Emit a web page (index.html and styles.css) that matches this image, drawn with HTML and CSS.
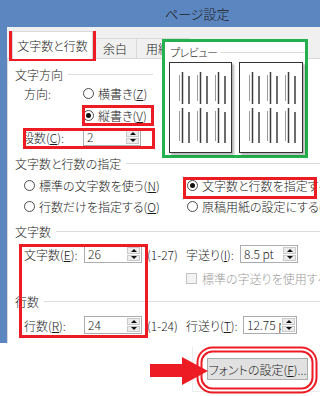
FILE: index.html
```html
<!DOCTYPE html>
<html lang="ja">
<head>
<meta charset="utf-8">
<title>ページ設定</title>
<link rel="stylesheet" href="styles.css">
</head>
<body>
<div class="screen">
  <div class="titlebar"><span class="title">ページ設定</span></div>
  <div class="dialog">
    <div class="frame-left"></div>
    <div class="body">
      <div class="tabs">
        <div class="tab active">文字数と行数</div>
        <div class="tab t2">余白</div>
        <div class="tab t3">用紙</div>
      </div>
      <div class="panel">
        <div class="ghead g1"><span>文字方向</span></div>
        <div class="row r22 ind9">
          <span class="lbl w59">方向:</span>
          <span class="radio"></span><span>横書き(<u>Z</u>)</span>
        </div>
        <div class="row r22 ind68">
          <span class="radio on"></span><span>縦書き(<u>V</u>)</span>
        </div>
        <div class="row r22 ind7">
          <span class="lbl w61">段数(<u>C</u>):</span>
          <span class="spin"><span class="val">2</span><span class="btns"><span class="up"></span><span class="dn"></span></span></span>
        </div>

        <div class="ghead g2"><span>文字数と行数の指定</span></div>
        <div class="radios">
          <div class="ropt"><span class="radio"></span><span>標準の文字数を使う(<u>N</u>)</span></div>
          <div class="ropt"><span class="radio on"></span><span>文字数と行数を指定する(<u>H</u>)</span></div>
          <div class="ropt"><span class="radio"></span><span>行数だけを指定する(<u>O</u>)</span></div>
          <div class="ropt"><span class="radio"></span><span>原稿用紙の設定にする(<u>X</u>)</span></div>
        </div>

        <div class="ghead g3"><span>文字数</span></div>
        <div class="row r20 ind9 m5">
          <span class="lbl w60">文字数(<u>E</u>):</span>
          <span class="spin"><span class="val">26</span><span class="btns"><span class="up"></span><span class="dn"></span></span></span>
          <span class="range">(1-27)</span>
          <span class="lbl w54">字送り(<u>I</u>):</span>
          <span class="spin"><span class="val">8.5 pt</span><span class="btns"><span class="up"></span><span class="dn"></span></span></span>
        </div>
        <div class="row r20 chkrow">
          <span class="check"></span><span class="disabled">標準の字送りを使用する(<u>A</u>)</span>
        </div>

        <div class="ghead g4"><span>行数</span></div>
        <div class="row r20 ind9 m6">
          <span class="lbl w60">行数(<u>R</u>):</span>
          <span class="spin"><span class="val">24</span><span class="btns"><span class="up"></span><span class="dn"></span></span></span>
          <span class="range">(1-24)</span>
          <span class="lbl w57">行送り(<u>T</u>):</span>
          <span class="spin narrow"><span class="val">12.75 pt</span><span class="btns"><span class="up"></span><span class="dn"></span></span></span>
        </div>
      </div>
    </div>
  </div>
  <div class="footer">
    <div class="btn-area">
      <div class="btn">フォントの設定(<u>F</u>)...</div>
    </div>
  </div>

  <div class="preview">
    <div class="pv-head"><span>プレビュー</span></div>
    <div class="pages">
      <div class="page">
        <svg width="61" height="89" viewBox="0 0 61 89">
          <g stroke="#9a9a9a" stroke-width="1">
            <line x1="9.5" y1="12" x2="9.5" y2="38"/><line x1="27.5" y1="12" x2="27.5" y2="38"/><line x1="45.5" y1="12" x2="45.5" y2="38"/>
            <line x1="9.5" y1="48" x2="9.5" y2="78"/><line x1="27.5" y1="48" x2="27.5" y2="78"/><line x1="45.5" y1="48" x2="45.5" y2="78"/>
          </g>
          <g stroke="#3c3c3c" stroke-width="1.5">
            <line x1="12.5" y1="9" x2="12.5" y2="41"/><line x1="19" y1="13" x2="19" y2="41"/>
            <line x1="30.5" y1="9" x2="30.5" y2="41"/><line x1="37" y1="13" x2="37" y2="41"/>
            <line x1="48.5" y1="9" x2="48.5" y2="41"/><line x1="55" y1="13" x2="55" y2="41"/>
            <line x1="12.5" y1="45" x2="12.5" y2="80"/><line x1="19" y1="49" x2="19" y2="80"/>
            <line x1="30.5" y1="45" x2="30.5" y2="80"/><line x1="37" y1="49" x2="37" y2="80"/>
            <line x1="48.5" y1="45" x2="48.5" y2="80"/><line x1="55" y1="49" x2="55" y2="80"/>
          </g>
        </svg>
      </div>
      <div class="page p2">
        <svg width="62" height="89" viewBox="0 0 62 89">
          <g stroke="#9a9a9a" stroke-width="1">
            <line x1="9.5" y1="12" x2="9.5" y2="38"/><line x1="27.5" y1="12" x2="27.5" y2="38"/><line x1="45.5" y1="12" x2="45.5" y2="38"/>
            <line x1="9.5" y1="48" x2="9.5" y2="78"/><line x1="27.5" y1="48" x2="27.5" y2="78"/><line x1="45.5" y1="48" x2="45.5" y2="78"/>
          </g>
          <g stroke="#3c3c3c" stroke-width="1.5">
            <line x1="12.5" y1="9" x2="12.5" y2="41"/><line x1="19" y1="13" x2="19" y2="41"/>
            <line x1="30.5" y1="9" x2="30.5" y2="41"/><line x1="37" y1="13" x2="37" y2="41"/>
            <line x1="48.5" y1="9" x2="48.5" y2="41"/><line x1="55" y1="13" x2="55" y2="41"/>
            <line x1="12.5" y1="45" x2="12.5" y2="80"/><line x1="19" y1="49" x2="19" y2="80"/>
            <line x1="30.5" y1="45" x2="30.5" y2="80"/><line x1="37" y1="49" x2="37" y2="80"/>
            <line x1="48.5" y1="45" x2="48.5" y2="80"/><line x1="55" y1="49" x2="55" y2="80"/>
          </g>
        </svg>
      </div>
    </div>
  </div>

  <div class="mark m-tab"></div>
  <div class="mark m-tate"></div>
  <div class="mark m-dan"></div>
  <div class="mark m-shitei"></div>
  <div class="mark m-count"></div>

  <svg class="arrow" width="62" height="32" viewBox="0 0 62 32">
    <polygon points="2,9 34,9 34,2 60,16 34,30 34,22 2,22" fill="#ed1c24"/>
  </svg>
  <svg class="ring" width="122" height="48" viewBox="0 0 122 48">
    <rect x="1.5" y="1.5" width="119" height="45" rx="15" fill="none" stroke="#ed1c24" stroke-width="2"/>
    <rect x="5.5" y="5.5" width="111" height="37" rx="11" fill="none" stroke="#ed1c24" stroke-width="2"/>
  </svg>
</div>
</body>
</html>
```
FILE: styles.css
```css
* { box-sizing: border-box; margin: 0; padding: 0; }
html, body { width: 320px; height: 396px; overflow: hidden; background: #fff; }
body {
  font-family: "Noto Sans CJK JP", "Noto Sans", sans-serif;
  font-size: 12px;
  font-weight: 300;
  color: #1a1a1a;
  font-feature-settings: "palt";
}
u { text-decoration: underline; text-underline-offset: 1px; }

.screen { position: relative; width: 320px; height: 396px; overflow: hidden; }

.titlebar {
  height: 27px;
  background: #5c86c0;
  padding-left: 165px;
  line-height: 27px;
  font-size: 13px;
  color: #1b1b1b;
}

.dialog { display: flex; height: 316px; }
.frame-left { width: 7px; background: #5c86c0; flex: none; }
.body { flex: 1; min-width: 0; background: #f0f0f0; display: flex; flex-direction: column; }

.tabs { height: 31px; display: flex; align-items: flex-end; padding-left: 5px; }
.tab {
  height: 20px;
  border: 1px solid #d9d9d9;
  border-bottom: none;
  display: flex;
  align-items: center;
  justify-content: center;
  background: #f0f0f0;
  white-space: nowrap;
}
.tab.active { width: 81px; height: 28px; margin-bottom: -1px; background: #fff; position: relative; z-index: 1; }
.tab.t2 { width: 44px; }
.tab.t3 { width: 54px; margin-left: -1px; justify-content: flex-start; padding-left: 9px; }

.panel {
  flex: 1;
  background: #fff;
  border-top: 1px solid #d9d9d9;
  border-left: 1px solid #d9d9d9;
  padding: 7px 0 0 7px;
}

.ghead { display: flex; align-items: center; height: 16px; gap: 5px; white-space: nowrap; }
.ghead::after { content: ""; flex: 1; height: 1px; background: #dcdcdc; }
.g1 { width: 138px; }
.g2 { margin-top: 7px; }
.g3 { margin-top: 6px; }
.g4 { margin-top: 5px; }

.row { display: flex; align-items: center; white-space: nowrap; }
.r22 { height: 22px; }
.r20 { height: 20px; }
.m5 { margin-top: 5px; }
.m6 { margin-top: 6px; }
.ind7 { padding-left: 7px; }
.ind9 { padding-left: 9px; }
.ind68 { padding-left: 68px; }
.chkrow { margin-top: 4px; padding-left: 171px; }

.lbl { flex: none; }
.w54 { width: 54px; }
.w57 { width: 57px; }
.w59 { width: 59px; }
.w60 { width: 60px; }
.w61 { width: 61px; }

.radio {
  width: 11px;
  height: 11px;
  border: 1px solid #4a4a4a;
  border-radius: 50%;
  background: #fff;
  margin-right: 4px;
  display: inline-flex;
  align-items: center;
  justify-content: center;
  flex: none;
}
.radio.on::before { content: ""; width: 5px; height: 5px; border-radius: 50%; background: #111; }

.radios {
  margin-top: 4px;
  padding-left: 9px;
  display: grid;
  grid-template-columns: 163px 1fr;
  grid-auto-rows: 21px;
  white-space: nowrap;
}
.ropt { display: flex; align-items: center; overflow: hidden; }

.spin {
  display: flex;
  width: 58px;
  height: 18px;
  border: 1px solid #abadb3;
  background: #fff;
  flex: none;
}
.spin.narrow { width: 54px; }
.spin .val { flex: 1; min-width: 0; padding-left: 3px; line-height: 16px; overflow: hidden; white-space: nowrap; }
.spin .btns { width: 15px; flex: none; display: flex; flex-direction: column; gap: 1px; padding: 1px; }
.spin .btns span {
  flex: 1;
  background: #ececec;
  border: 1px solid #c9c9c9;
  display: flex;
  align-items: center;
  justify-content: center;
}
.up::before {
  content: "";
  border-left: 3px solid transparent;
  border-right: 3px solid transparent;
  border-bottom: 3px solid #111;
}
.dn::before {
  content: "";
  border-left: 3px solid transparent;
  border-right: 3px solid transparent;
  border-top: 3px solid #111;
}

.range { width: 44px; padding-left: 5px; flex: none; }

.check {
  width: 11px;
  height: 11px;
  border: 1px solid #c3c3c3;
  background: #f3f3f3;
  margin-right: 5px;
  flex: none;
}
.disabled { color: #9a9a9a; }

.footer { height: 53px; background: #fff; padding: 4px 0 0 192px; }
.btn-area {
  height: 45px;
  border-left: 1px solid #ececec;
  border-bottom: 1px solid #ececec;
  padding: 11px 0 0 14px;
}
.btn {
  width: 101px;
  height: 22px;
  background: #e1e1e1;
  border: 1px solid #adadad;
  display: flex;
  align-items: center;
  justify-content: center;
  white-space: nowrap;
}

/* overlays (annotations) */
.preview {
  position: absolute;
  left: 162px;
  top: 39px;
  width: 146px;
  height: 119px;
  border: 3px solid #22b14c;
  background: #fff;
  padding-top: 3px;
}
.pv-head {
  display: flex;
  align-items: center;
  height: 14px;
  padding-left: 5px;
  gap: 3px;
  font-size: 11px;
  letter-spacing: -0.5px;
}
.pv-head::after { content: ""; flex: 1; height: 1px; background: #dcdcdc; }
.pages { display: flex; gap: 7px; padding-left: 4px; margin-top: 3px; }
.page {
  width: 63px;
  height: 91px;
  border: 1px solid #333;
  background: #fff;
  box-shadow: 2px 2px 2px rgba(0, 0, 0, 0.3);
}
.page.p2 { width: 64px; }
.page svg { display: block; }

.mark { position: absolute; border: 3px solid #ed1c24; }
.m-tab { left: 9px; top: 31px; width: 87px; height: 30px; }
.m-tate { left: 82px; top: 105px; width: 72px; height: 21px; }
.m-dan { left: 23px; top: 128px; width: 132px; height: 21px; }
.m-shitei { left: 183px; top: 177px; width: 134px; height: 22px; }
.m-count { left: 19px; top: 244px; width: 129px; height: 94px; }

.arrow { position: absolute; left: 148px; top: 355px; }
.ring { position: absolute; left: 196px; top: 346px; }
```
